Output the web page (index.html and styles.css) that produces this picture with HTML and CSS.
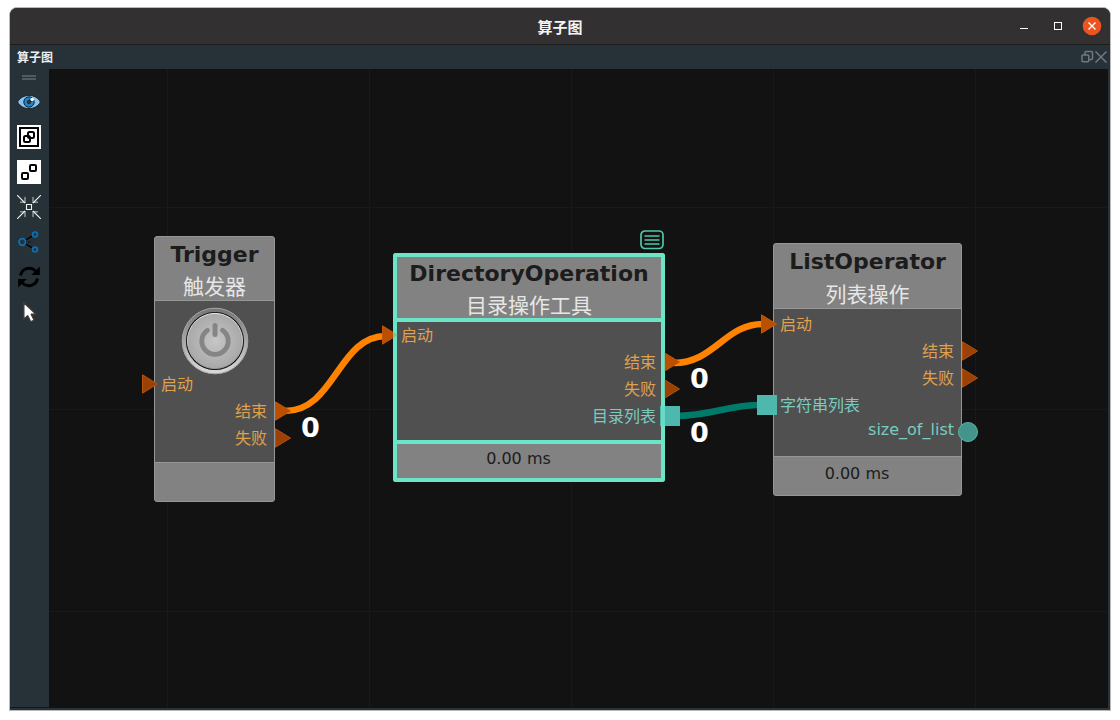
FILE: index.html
```html
<!DOCTYPE html>
<html lang="zh-CN">
<head>
<meta charset="utf-8">
<meta name="viewport" content="width=device-width, initial-scale=1">
<title>算子图</title>
<link rel="stylesheet" href="styles.css">
</head>
<body>
<div class="window">
  <header class="titlebar">
    <h1 class="titlebar-text">算子图</h1>
    <div class="window-controls">
      <button class="window-button" type="button" aria-label="最小化"><svg viewBox="0 0 20 20"><path d="M6 12.5h8" stroke="#fff" fill="none"/></svg></button>
      <button class="window-button" type="button" aria-label="最大化"><svg viewBox="0 0 20 20"><rect x="6.500" y="6.500" width="7" height="7" stroke="#fff" fill="none"/></svg></button>
      <button class="window-button" type="button" aria-label="关闭"><svg viewBox="0 0 20 20"><circle cx="10" cy="10" r="9.300" fill="#e95420"/><path d="M6.500 6.500l7 7M13.500 6.500l-7 7" stroke="#fff" stroke-width="1.300" fill="none"/></svg></button>
    </div>
  </header>
  <div class="dock-title">
    <h2 class="dock-name">算子图</h2>
    <div class="dock-controls">
      <button class="dock-button" type="button" aria-label="浮动"><svg viewBox="0 0 14 14"><g fill="none" stroke="#71797c" stroke-width="1.500"><rect x="2" y="5" width="6.800" height="6.800" rx="1"/><path d="M5 5V2.500q0-1 1-1h5.500q1 0 1 1v6q0 1-1 1H8.800"/></g></svg></button>
      <button class="dock-button" type="button" aria-label="关闭面板"><svg viewBox="0 0 14 14"><path d="M1.500 1.500l11 11M12.500 1.500l-11 11" fill="none" stroke="#71797c" stroke-width="1.500"/></svg></button>
    </div>
  </div>
  <main class="workspace">
    <nav class="toolbar" aria-label="工具栏">
      <div class="toolbar-grip"></div>
      <button class="tool" type="button" aria-label="显示"><svg viewBox="0 0 24 24"><path d="M.6 12C5 3.200 19 3.200 23.400 12 19 20.800 5 20.800.6 12z" fill="#8ac0ec" stroke="#17252e"/><circle cx="12" cy="12" r="5.200" fill="#2383c8" stroke="#16212a"/><circle cx="12" cy="12" r="2.200" fill="#26353f"/><path d="M12 12V8.500l4 3.500z" fill="#26353f"/><circle cx="15.200" cy="9.500" r="1.700" fill="#fff"/></svg></button>
      <button class="tool" type="button" aria-label="组合"><svg viewBox="0 0 24 24"><path d="M0 0h24v24H0z" fill="#fff"/><g fill="none" stroke="#000" stroke-width="2"><path d="M3 3h18v18H3z"/><rect x="7" y="11" width="6" height="6" rx="1.500"/><rect x="11" y="7" width="6" height="6" rx="1.500"/></g></svg></button>
      <button class="tool" type="button" aria-label="取消组合"><svg viewBox="0 0 24 24"><path d="M0 0h24v24H0z" fill="#fff"/><g fill="none" stroke="#000" stroke-width="2"><rect x="5" y="13" width="6" height="6" rx="1"/><rect x="13" y="5" width="6" height="6" rx="1"/></g></svg></button>
      <button class="tool" type="button" aria-label="居中"><svg viewBox="0 0 24 24"><g fill="none" stroke="#89938f" stroke-width="1.600"><path d="M3 7.300h5V2M16 2v5.300h5M3 16.700h5V22M16 22v-5.300h5"/></g><path d="M0 0l8 8M24 0l-8 8M0 24l8-8M24 24l-8-8M9.500 9.500h5v5h-5z" fill="none" stroke="#eef1f0" stroke-width="1.100"/></svg></button>
      <button class="tool" type="button" aria-label="连接"><svg viewBox="0 0 24 24"><path d="M8 10.500l8-4.800M8 13.500l8 4.800" stroke="#000" stroke-width="1.400"/><path d="M9 12h5" stroke="#000" stroke-dasharray="1 1"/><g fill="none" stroke="#0b70b8" stroke-width="1.700"><circle cx="5.300" cy="12" r="3.300"/><circle cx="18" cy="4.400" r="2.400"/><circle cx="18" cy="19.600" r="2.400"/></g></svg></button>
      <button class="tool" type="button" aria-label="刷新"><svg viewBox="0 0 24 24"><g fill="none" stroke="#000" stroke-width="3"><path d="M3.500 10.500A8.800 8.800 0 0 1 18.500 6"/><path d="M20.500 13.500A8.800 8.800 0 0 1 5.500 18"/></g><path d="M22.800 1.500V10H14.300zM1.200 22.500V14h8.500z"/></svg></button>
      <button class="tool" type="button" aria-label="选择"><svg viewBox="0 0 24 24"><path d="M6.800 2.800v16.500l3.900-3.600 3 6.200 3.500-1.700-3-5.900h4.900z" fill="#fff" stroke="#3e3a38" stroke-width="1.400" stroke-linejoin="round"/></svg></button>
    </nav>
    <section class="canvas" aria-label="算子图画布">
      <svg class="wires" aria-hidden="true">
        <g fill="none" stroke-width="6.500">
          <path d="M236 342C286 342 289 267 337 267" stroke="#ff8200"/>
          <path d="M625 294C665 294 676 255 714 255" stroke="#ff8200"/>
          <path d="M625 347C665 347 676 336 712 336" stroke="#007a6a"/>
        </g>
      </svg>

      <article class="node node-trigger">
        <header class="node-head"><h3 class="node-title">Trigger</h3><p class="node-subtitle">触发器</p></header>
        <div class="node-body">
          <button class="power" type="button" aria-label="触发">
            <svg viewBox="0 0 68 68">
              <defs>
                <linearGradient id="ring" x1="0" y1="0" x2="0" y2="1"><stop offset="0" stop-color="#777"/><stop offset="1" stop-color="#d8d8d8"/></linearGradient>
                <radialGradient id="face"><stop offset="0" stop-color="#c6c6c6"/><stop offset="1" stop-color="#a9a9a9"/></radialGradient>
                <linearGradient id="rim" x1="0" y1="0" x2="0" y2="1"><stop offset="0" stop-color="#eee"/><stop offset="1" stop-color="#999"/></linearGradient>
              </defs>
              <circle cx="34" cy="34" r="31" fill="#6d6d6d" stroke="url(#ring)" stroke-width="4"/>
              <circle cx="34" cy="34" r="32.800" fill="none" stroke="#a6a6a6"/>
              <circle cx="34" cy="34" r="29" fill="#111"/>
              <circle cx="34" cy="34" r="27.600" fill="url(#face)" stroke="url(#rim)"/>
              <path d="M26.500 23.300A13.200 13.200 0 1 0 41.500 23.300" fill="none" stroke="#858585" stroke-width="4.800" stroke-linecap="round"/>
              <path d="M34 18.500V27.500" stroke="#858585" stroke-width="5" stroke-linecap="round"/>
            </svg>
          </button>
          <div class="port port-in">启动<svg class="pin pin-idle" viewBox="0 0 20 20"><path d="M4.500.8L19.500 10 4.500 19.200z"/></svg></div>
          <div class="port port-out">结束<svg class="pin pin-linked" viewBox="0 0 20 20"><path d="M4.500.8L19.500 10 4.500 19.200z"/></svg></div>
          <div class="port port-out">失败<svg class="pin pin-idle" viewBox="0 0 20 20"><path d="M4.500.8L19.500 10 4.500 19.200z"/></svg></div>
        </div>
        <footer class="node-foot"></footer>
      </article>

      <article class="node node-directory node-selected">
        <svg class="note" viewBox="0 0 24 20"><g fill="none" stroke="#4fc7a9" stroke-width="1.700"><rect x="1" y="1" width="22" height="17.500" rx="4"/><path d="M4.500 6h15M4.500 10h15M4.500 14h15"/></g></svg>
        <header class="node-head"><h3 class="node-title">DirectoryOperation</h3><p class="node-subtitle">目录操作工具</p></header>
        <div class="node-body">
          <div class="port port-in">启动<svg class="pin pin-linked" viewBox="0 0 20 20"><path d="M4.500.8L19.500 10 4.500 19.200z"/></svg></div>
          <div class="port port-out">结束<svg class="pin pin-linked" viewBox="0 0 20 20"><path d="M4.500.8L19.500 10 4.500 19.200z"/></svg></div>
          <div class="port port-out">失败<svg class="pin pin-idle" viewBox="0 0 20 20"><path d="M4.500.8L19.500 10 4.500 19.200z"/></svg></div>
          <div class="port port-out port-data">目录列表<svg class="pin pin-data" viewBox="0 0 20 20"><path d="M0 0h20v20H0z"/></svg></div>
        </div>
        <footer class="node-foot">0.00 ms</footer>
      </article>

      <article class="node node-list">
        <header class="node-head"><h3 class="node-title">ListOperator</h3><p class="node-subtitle">列表操作</p></header>
        <div class="node-body">
          <div class="port port-in">启动<svg class="pin pin-linked" viewBox="0 0 20 20"><path d="M4.500.8L19.500 10 4.500 19.200z"/></svg></div>
          <div class="port port-out">结束<svg class="pin pin-idle" viewBox="0 0 20 20"><path d="M4.500.8L19.500 10 4.500 19.200z"/></svg></div>
          <div class="port port-out">失败<svg class="pin pin-idle" viewBox="0 0 20 20"><path d="M4.500.8L19.500 10 4.500 19.200z"/></svg></div>
          <div class="port port-in port-data">字符串列表<svg class="pin pin-data" viewBox="0 0 20 20"><path d="M0 0h20v20H0z"/></svg></div>
          <div class="port port-out port-data port-latin">size_of_list<svg class="pin pin-value" viewBox="0 0 20 20"><circle cx="10" cy="10" r="9.500"/></svg></div>
        </div>
        <footer class="node-foot">0.00 ms</footer>
      </article>

      <span class="count count-trigger">0</span>
      <span class="count count-done">0</span>
      <span class="count count-list">0</span>
    </section>
  </main>
</div>
</body>
</html>
```
FILE: styles.css
```css
* { box-sizing: border-box; }

body {
  margin: 0;
  background: #fff;
  font-family: "DejaVu Sans", "Noto Sans CJK SC", sans-serif;
}

h1, h2, h3, p { margin: 0; }

button {
  display: flex;
  align-items: center;
  justify-content: center;
  padding: 0;
  border: 0;
  background: none;
  cursor: pointer;
}

svg { display: block; }

.window {
  display: flex;
  flex-direction: column;
  height: calc(100vh - 16px);
  margin: 7px 9px 9px;
  border: 1px solid #b9b9b9;
  border-radius: 8px 8px 0 0;
  overflow: hidden;
  background: #273238;
}

.titlebar {
  display: grid;
  grid-template-columns: 1fr auto 1fr;
  align-items: center;
  height: 37px;
  border-bottom: 1px solid #1e1d1d;
  background: #333031;
}

.titlebar-text {
  grid-column: 2;
  padding-top: 2px;
  color: #f4f4f4;
  font: bold 15px/20px "Noto Sans CJK SC", sans-serif;
}

.window-controls {
  display: flex;
  justify-content: flex-end;
  gap: 14px;
  padding-right: 8px;
}

.window-button svg { width: 20px; height: 20px; }

.dock-title {
  display: flex;
  align-items: center;
  justify-content: space-between;
  height: 24px;
  padding: 0 2px 0 7px;
}

.dock-name {
  color: #eee;
  font: bold 12px/18px "Noto Sans CJK SC", sans-serif;
}

.dock-controls { display: flex; }

.dock-button svg { width: 14px; height: 14px; }

.workspace {
  display: flex;
  flex: 1;
  min-height: 0;
  padding: 0 2px 2px 0;
}

.toolbar {
  display: flex;
  flex-direction: column;
  align-items: center;
  width: 39px;
  padding: 6px 1px 0 0;
  border-bottom: 1px solid #141619;
}

.toolbar-grip {
  width: 14px;
  height: 5px;
  margin-bottom: 4px;
  border: solid #535a5d;
  border-width: 2px 0;
}

.tool { width: 36px; height: 35px; }

.tool svg { width: 24px; height: 24px; }

/* Node graph surface with a 202px grid */
.canvas {
  position: relative;
  flex: 1;
  overflow: hidden;
  background-color: #121212;
  background-image:
    linear-gradient(90deg, #191919 1px, transparent 1px),
    linear-gradient(#191919 1px, transparent 1px);
  background-position: 118px 138px;
  background-size: 202px 202px;
}

.wires {
  position: absolute;
  inset: 0;
  width: 100%;
  height: 100%;
}

.node {
  --edge: 1px;
  --edge-color: #969696;
  position: absolute;
  display: flex;
  flex-direction: column;
  border: var(--edge) solid var(--edge-color);
  border-radius: 3px;
  background: #828282;
}

.node-trigger { left: 105px; top: 167px; width: 121px; }
.node-directory { left: 344px; top: 184px; width: 272px; }
.node-list { left: 724px; top: 174px; width: 189px; }

.node-selected {
  --edge: 4px;
  --edge-color: #6ae5c7;
}

.node-selected::after {
  content: "";
  position: absolute;
  inset: -4px;
  border: 4px solid rgb(106 229 199 / 80%);
  border-radius: 3px;
  pointer-events: none;
}

.node-head {
  padding-top: 2px;
  text-align: center;
  white-space: nowrap;
}

.node-title {
  color: #1c1c1c;
  font-size: 22px;
  line-height: 32px;
}

.node-subtitle {
  color: #e6e6e6;
  font: 21px/30px "Noto Sans CJK SC", sans-serif;
}

.node-trigger .node-subtitle { line-height: 29px; }

.node-selected .node-head { padding-top: 1px; }

.node-selected .node-subtitle { line-height: 28px; }

.node-body {
  border: solid var(--edge-color);
  border-width: var(--edge) 0;
  background: #505050;
}

.node-trigger .node-body { padding: 6px 0 10px; }
.node-directory .node-body { padding-bottom: 10px; }
.node-list .node-body { padding: 2px 0 10px; }

.power {
  margin: 0 auto -4px;
  border-radius: 50%;
}

.power svg { width: 68px; height: 68px; }

.port {
  position: relative;
  display: flex;
  height: 27px;
  padding: 0 7px 0 6px;
  color: #e0a04d;
  font-size: 16px;
  line-height: 27px;
}

.node-selected .port { padding: 0 5px 0 4px; }

.port-out { justify-content: flex-end; }

.port-data { color: #79ccc0; }

.port-latin { line-height: 22px; }

.pin {
  position: absolute;
  top: 3px;
  width: 20px;
  height: 20px;
}

.port-in .pin { left: calc(-16px - var(--edge)); }
.port-out .pin { right: calc(-16px - var(--edge)); }

.node-selected .port-in .pin { left: -19px; }
.node-selected .port-out .pin { right: -19px; }

.pin-idle { fill: #9b4106; stroke: #b3520d; }
.pin-linked { fill: #bb4f00; stroke: #bf5606; }
.pin-data { fill: #4fb8ae; }
.pin-value { fill: #43958c; stroke: #4fb8ae; }

.node-foot {
  height: 38px;
  padding: 0 21px 0 0;
  color: #1c1c1c;
  font-size: 16px;
  line-height: 34px;
  text-align: center;
}

.node-selected .node-foot {
  height: 34px;
  line-height: 30px;
}

.note {
  position: absolute;
  top: -27px;
  right: -3px;
  width: 24px;
  height: 20px;
}

.count {
  position: absolute;
  color: #fff;
  font-size: 27px;
  font-weight: bold;
  line-height: 32px;
}

.count-trigger { left: 252px; top: 343px; }
.count-done { left: 641px; top: 294px; }
.count-list { left: 641px; top: 348px; }
```
